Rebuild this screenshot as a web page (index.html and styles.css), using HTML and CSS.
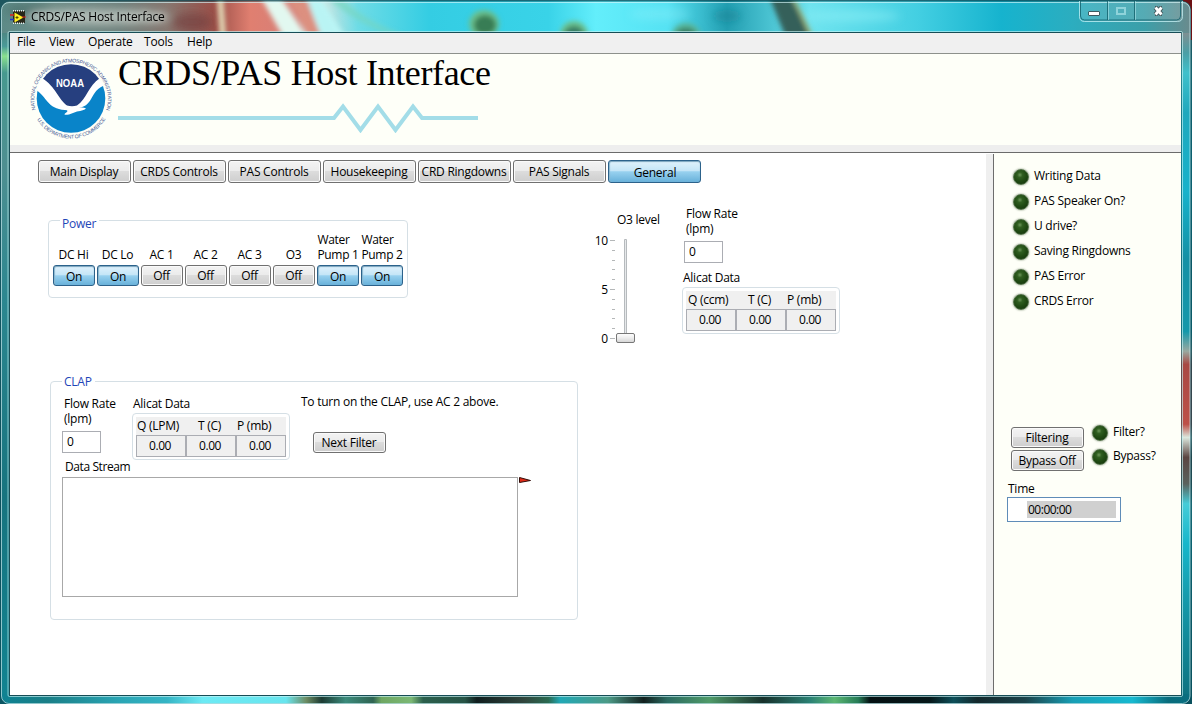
FILE: index.html
```html
<!DOCTYPE html>
<html lang="en">
<head>
<meta charset="utf-8">
<title>CRDS/PAS Host Interface</title>
<link rel="stylesheet" href="styles.css">
</head>
<body>
<svg class="wallpaper" width="1192" height="704" viewBox="0 0 1192 704" aria-hidden="true">
  <defs>
    <filter id="soft" x="-20%" y="-40%" width="140%" height="180%"><feGaussianBlur stdDeviation="4"/></filter>
    <filter id="fine" x="-30%" y="-30%" width="160%" height="160%"><feGaussianBlur stdDeviation="2.4"/></filter>
    <linearGradient id="top">
      <stop offset="0" stop-color="#5c8a87"/><stop offset=".04" stop-color="#6f8f8a"/><stop offset=".1" stop-color="#6d7f7b"/>
      <stop offset=".14" stop-color="#877770"/><stop offset=".18" stop-color="#9a4f48"/><stop offset=".21" stop-color="#e07f70"/>
      <stop offset=".25" stop-color="#d5807a"/><stop offset=".27" stop-color="#cfe6e2"/><stop offset=".3" stop-color="#6edce6"/>
      <stop offset=".36" stop-color="#34cde3"/><stop offset=".46" stop-color="#39d3e8"/><stop offset=".5" stop-color="#63eefb"/>
      <stop offset=".56" stop-color="#56e2f3"/><stop offset=".61" stop-color="#239fb2"/><stop offset=".68" stop-color="#6fe4ef"/>
      <stop offset=".77" stop-color="#43cfe2"/><stop offset=".84" stop-color="#16b3ce"/><stop offset=".9" stop-color="#2cadbf"/>
      <stop offset=".96" stop-color="#3c9fa9"/><stop offset="1" stop-color="#6b8a8c"/>
    </linearGradient>
    <linearGradient id="left" x2="0" y2="1">
      <stop offset="0" stop-color="#4d8783"/><stop offset=".02" stop-color="#4a9a98"/><stop offset=".035" stop-color="#8ae08e"/>
      <stop offset=".06" stop-color="#47998f"/><stop offset=".2" stop-color="#4e8f91"/><stop offset=".4" stop-color="#2c8790"/>
      <stop offset=".7" stop-color="#17747f"/><stop offset="1" stop-color="#118391"/>
    </linearGradient>
    <linearGradient id="right" x2="0" y2="1">
      <stop offset="0" stop-color="#7e8f92"/><stop offset=".03" stop-color="#4a9fa6"/><stop offset=".06" stop-color="#3fc0cb"/>
      <stop offset=".12" stop-color="#1fa8bd"/><stop offset=".24" stop-color="#17b2cb"/><stop offset=".34" stop-color="#1390a5"/>
      <stop offset=".45" stop-color="#1398aa"/><stop offset=".48" stop-color="#9aa9a0"/><stop offset=".5" stop-color="#a84843"/>
      <stop offset=".59" stop-color="#bd5048"/><stop offset=".61" stop-color="#dce8de"/><stop offset=".64" stop-color="#5b4541"/>
      <stop offset=".68" stop-color="#5a625d"/><stop offset=".71" stop-color="#45ccd8"/><stop offset=".77" stop-color="#16b7cb"/>
      <stop offset=".85" stop-color="#159bac"/><stop offset="1" stop-color="#0d7280"/>
    </linearGradient>
    <linearGradient id="bottom">
      <stop offset="0" stop-color="#0e8293"/><stop offset=".04" stop-color="#1a7f87"/><stop offset=".1" stop-color="#2aa5b4"/>
      <stop offset=".14" stop-color="#35b5c5"/><stop offset=".17" stop-color="#6ceaf4"/><stop offset=".24" stop-color="#68e5ee"/>
      <stop offset=".257" stop-color="#6c8b62"/><stop offset=".27" stop-color="#1c3b33"/><stop offset=".29" stop-color="#3b8b7b"/>
      <stop offset=".313" stop-color="#2f6452"/><stop offset=".32" stop-color="#6fa762"/><stop offset=".345" stop-color="#7bb874"/>
      <stop offset=".355" stop-color="#2b5f4c"/><stop offset=".39" stop-color="#275446"/><stop offset=".4" stop-color="#101e1e"/>
      <stop offset=".44" stop-color="#31463d"/><stop offset=".46" stop-color="#2a6a50"/><stop offset=".47" stop-color="#21a8b5"/>
      <stop offset=".51" stop-color="#4c9a86"/><stop offset=".54" stop-color="#12201e"/><stop offset=".56" stop-color="#2b6b61"/>
      <stop offset=".595" stop-color="#4f9a68"/><stop offset=".64" stop-color="#17302b"/><stop offset=".68" stop-color="#2b8274"/>
      <stop offset=".7" stop-color="#5bb672"/><stop offset=".72" stop-color="#267c56"/><stop offset=".73" stop-color="#041012"/>
      <stop offset=".78" stop-color="#061719"/><stop offset=".8" stop-color="#0e4f59"/><stop offset=".82" stop-color="#13282c"/>
      <stop offset=".86" stop-color="#1b4249"/><stop offset=".9" stop-color="#189fb5"/><stop offset=".95" stop-color="#17b9d0"/>
      <stop offset=".98" stop-color="#096c7c"/><stop offset="1" stop-color="#0a6f80"/>
    </linearGradient>
  </defs>
  <rect width="1192" height="34" fill="url(#top)"/>
  <g filter="url(#soft)">
    <ellipse cx="30" cy="10" rx="24" ry="6" fill="#426864" opacity=".6"/>
    <ellipse cx="98" cy="17" rx="72" ry="9" fill="#b3bdb7" opacity=".7"/>
    <ellipse cx="192" cy="22" rx="20" ry="9" fill="#713d3a" opacity=".6"/>
    <ellipse cx="660" cy="14" rx="30" ry="6" fill="#9af6fb" opacity=".3"/>
    <ellipse cx="727" cy="16" rx="14" ry="6" fill="#147b8e" opacity=".5"/>
    <ellipse cx="850" cy="16" rx="50" ry="6" fill="#8df0f8" opacity=".5"/>
  </g>
  <g filter="url(#fine)">
    <path d="M217-4h6l3 42h-6z" fill="#e4ddb9"/>
    <path d="M260-4h20l28 42h-24z" fill="#e2f8f0"/>
    <path d="M286-4h18l18 42h-12z" fill="#dc8f7f"/>
    <path d="M306-4h14l26 42h-24z" fill="#b9f4f4"/>
    <path d="M340-4q20 24 70 42h-12Q350 20 326-4z" fill="#77d5bd" opacity=".7"/>
    <ellipse cx="484" cy="24" rx="15" ry="14" fill="#6cc08c"/><ellipse cx="485" cy="25" rx="11" ry="10" fill="#397d55"/>
    <ellipse cx="574" cy="35" rx="14" ry="14" fill="#6cc08c"/><ellipse cx="574" cy="35" rx="10" ry="9" fill="#397d65"/>
    <ellipse cx="686" cy="35" rx="14" ry="12" fill="#58b598"/><ellipse cx="686" cy="35" rx="10" ry="7" fill="#397d65"/>
    <path d="M769-4h21l22 42h-26z" fill="#35605a"/><path d="M791-4h3l20 42h-4z" fill="#98ad72"/>
  </g>
  <rect y="33" width="11" height="663" fill="url(#left)"/>
  <rect x="1180" y="33" width="12" height="663" fill="url(#right)"/>
  <rect y="694" width="1192" height="10" fill="url(#bottom)"/>
  <path d="M0 0h1192v704H0zM1.5 9.500a8 8 0 0 1 8-8h1173a7.500 7.500 0 0 1 7.500 8v686a8 8 0 0 1-8 8H9.500a8 8 0 0 1-8-8z" fill="#0a4652" fill-rule="evenodd" opacity=".75"/>
  <path d="M1183 0h9v40h-1V9q-1-7-8-8z" fill="#6d1114"/>
  <rect x="1.500" y="2.500" width="1188.500" height="701" rx="7.500" fill="none" stroke="#d5f8fa" stroke-opacity=".65"/>
  <rect x="8" y="31.500" width="1174.500" height="665" rx="1.500" fill="none" stroke="#c6f3f5" stroke-opacity=".65"/>
  <rect x="9.500" y="32.500" width="1171.500" height="663" fill="none" stroke="#174d56"/>
</svg>

<div class="window">
  <header class="titlebar">
    <svg class="app-icon" width="16" height="14" viewBox="0 0 16 14">
      <rect x="3" y="1" width="12" height="12" fill="#28281b"/>
      <path d="M3 .8h12M3 13.200h12" stroke="#eee" stroke-width="1.500" stroke-dasharray="1 1"/>
      <path d="M4.500 2.500l9 5-9 5z" fill="#ffef23"/>
      <path d="M7 6v3M5.500 7.500h3" stroke="#544800"/>
      <path d="M0 5h4" stroke="#d8201e" stroke-width="1.500"/><path d="M0 9.500h4" stroke="#2535c9" stroke-width="1.500"/><path d="M12 7h4" stroke="#d8201e"/>
    </svg>
    <h1 class="caption">CRDS/PAS Host Interface</h1>
    <svg class="controls" width="104" height="21" viewBox="0 0 104 21">
      <path d="M.5 0v15.500q0 5 5 5h93q5 0 5-5V0" fill="#fff" fill-opacity=".13" stroke="#c5f2f5" stroke-opacity=".75"/>
      <path d="M1.500 0v15q0 4 4 4h92q4 0 4-4V0M28.500 0v19M55.500 0v19" fill="none" stroke="#13606c" stroke-opacity=".8"/>
      <path d="M29.500 0v19M56.500 0v19" stroke="#bdf0f4" stroke-opacity=".5"/>
      <rect x="9.500" y="10.500" width="11" height="4" rx=".5" fill="#fff" stroke="#3c5b61"/>
      <path d="M38 7h8v6h-8z" fill="none" stroke="#8fd3da" stroke-width="2"/>
      <path d="M76.500 6.500l6 7M82.500 6.500l-6 7" stroke="#45585d" stroke-width="4.800"/>
      <path d="M76 6.500h2M81 6.500h2M76 13.500h2M81 13.500h2" stroke="#45585d" stroke-width="3"/>
      <path d="M76.500 6.500l6 7M82.500 6.500l-6 7" stroke="#fff" stroke-width="2.800"/>
    </svg>
  </header>

  <div class="client">
    <nav class="menu"><span class="m-file">File</span><span class="m-view">View</span><span class="m-operate">Operate</span><span class="m-tools">Tools</span><span>Help</span></nav>

    <section class="banner">
      <svg class="logo" width="84" height="84" viewBox="0 0 84 84" role="img">
        <defs>
          <clipPath id="disc"><circle cx="42" cy="42.500" r="34.300"/></clipPath>
          <path id="ringTop" d="M7 54.500A36.800 36.800 0 1 1 77 54.500"/>
          <path id="ringBottom" d="M6.500 61A40 40 0 0 0 77.500 61"/>
        </defs>
        <g clip-path="url(#disc)">
          <rect width="84" height="84" fill="#fff"/>
          <path d="M13 22C20 0 62 0 71 22C59 30 58 43 48 49.500Q43 51 38 49.500C29 43 27 31 13 22z" fill="#263f7f"/>
          <path d="M5 33C18 39 17 53 36 54Q41 54 36 57.500Q34 59.500 40 58.500L48 55.500Q55 54.500 57 52.500Q54 51 50 52C66 49 60 34 77 29V80H5z" fill="#0984c9"/>
        </g>
        <text x="41" y="31" class="noaa" textLength="28" lengthAdjust="spacingAndGlyphs">NOAA</text>
        <text class="ring"><textPath href="#ringTop" textLength="137" startOffset="1">NATIONAL OCEANIC AND ATMOSPHERIC ADMINISTRATION</textPath></text>
        <text class="ring"><textPath href="#ringBottom" textLength="82" startOffset="3">U.S. DEPARTMENT OF COMMERCE</textPath></text>
      </svg>
      <div class="brand">
        <h2 class="headline">CRDS/PAS Host Interface</h2>
        <svg class="wave" width="360" height="30" viewBox="0 0 360 30"><path d="M0 15H216L225 3.500L242.500 27L260 3.500L277.500 27L295 3.500L304 15H360" fill="none" stroke="#a3dde8" stroke-width="4"/></svg>
      </div>
    </section>

    <div class="body">
      <main class="pane">
        <div class="tabs">
          <button class="btn tab">Main Display</button><button class="btn tab">CRDS Controls</button><button class="btn tab">PAS Controls</button><button class="btn tab">Housekeeping</button><button class="btn tab">CRD Ringdowns</button><button class="btn tab">PAS Signals</button><button class="btn tab on">General</button>
        </div>

        <div class="upper">
          <section class="group power">
            <h3 class="legend">Power</h3>
            <div class="switches">
              <div class="switch"><span>DC Hi</span><button class="btn on">On</button></div>
              <div class="switch"><span>DC Lo</span><button class="btn on">On</button></div>
              <div class="switch"><span>AC 1</span><button class="btn">Off</button></div>
              <div class="switch"><span>AC 2</span><button class="btn">Off</button></div>
              <div class="switch"><span>AC 3</span><button class="btn">Off</button></div>
              <div class="switch"><span>O3</span><button class="btn">Off</button></div>
              <div class="switch pump"><span>Water<br>Pump 1</span><button class="btn on">On</button></div>
              <div class="switch pump"><span>Water<br>Pump 2</span><button class="btn on">On</button></div>
            </div>
          </section>

          <section class="level">
            <span class="level-name">O3 level</span>
            <svg width="54" height="120" viewBox="-4 0 54 120">
              <defs><linearGradient id="thumb" x2="0" y2="1"><stop offset="0" stop-color="#fff"/><stop offset=".5" stop-color="#ededed"/><stop offset="1" stop-color="#d4d4d4"/></linearGradient></defs>
              <path d="M17 11.500h5M17 60.500h5M17 109.500h5M19 21.500h3M19 31.500h3M19 40.500h3M19 50.500h3M19 70.500h3M19 80.500h3M19 89.500h3M19 99.500h3" stroke="#b4b7b8"/>
              <path d="M31.500 109V10.500h2V109" fill="#e6e8ea" stroke="#b6babd"/>
              <rect x="23.500" y="104.500" width="18" height="9" rx="1.500" fill="url(#thumb)" stroke="#777"/>
              <text x="15" y="16" class="tick">10</text><text x="15" y="65" class="tick">5</text><text x="15" y="114" class="tick">0</text>
            </svg>
          </section>

          <section class="flow-side">
            <span class="flow-label">Flow Rate<br>(lpm)</span>
            <div class="field">0</div>
            <span class="alicat-label">Alicat Data</span>
            <div class="cluster">
              <div class="heads"><span class="c1">Q (ccm)</span><span class="c2">T (C)</span><span>P (mb)</span></div>
              <div class="values"><span>0.00</span><span>0.00</span><span>0.00</span></div>
            </div>
          </section>
        </div>

        <section class="group clap">
          <h3 class="legend">CLAP</h3>
          <div class="clap-row">
            <div class="clap-flow"><span class="flow-label">Flow Rate<br>(lpm)</span><div class="field">0</div></div>
            <div class="clap-alicat">
              <span class="alicat-label">Alicat Data</span>
              <div class="cluster">
                <div class="heads lpm"><span class="c1">Q (LPM)</span><span class="c2">T (C)</span><span>P (mb)</span></div>
                <div class="values"><span>0.00</span><span>0.00</span><span>0.00</span></div>
              </div>
            </div>
            <div class="clap-note"><span>To turn on the CLAP, use AC 2 above.</span><button class="btn next">Next Filter</button></div>
          </div>
          <span class="stream-label">Data Stream</span>
          <div class="stream-row">
            <div class="stream"></div>
            <svg width="13" height="8" viewBox="0 0 13 8"><path d="M.5.500L11.500 3.500L.5 5.500z" fill="#e02a17" stroke="#310c08"/></svg>
          </div>
        </section>
      </main>

      <div class="splitter"></div>

      <aside class="status">
        <div class="leds">
          <div class="led-row"><i class="led"></i><span>Writing Data</span></div>
          <div class="led-row"><i class="led"></i><span>PAS Speaker On?</span></div>
          <div class="led-row"><i class="led"></i><span>U drive?</span></div>
          <div class="led-row"><i class="led"></i><span>Saving Ringdowns</span></div>
          <div class="led-row"><i class="led"></i><span>PAS Error</span></div>
          <div class="led-row"><i class="led"></i><span>CRDS Error</span></div>
        </div>
        <div class="filters">
          <div class="filter-row"><button class="btn wide">Filtering</button><i class="led"></i><span>Filter?</span></div>
          <div class="filter-row"><button class="btn wide">Bypass Off</button><i class="led"></i><span>Bypass?</span></div>
        </div>
        <span class="time-label">Time</span>
        <div class="time"><span>00:00:00</span></div>
      </aside>
    </div>
  </div>
</div>
</body>
</html>
```
FILE: styles.css
```css
* { box-sizing: border-box; }
body {
  margin: 0;
  width: 1192px;
  height: 704px;
  overflow: hidden;
  position: relative;
  font: 12px/15px "Open Sans", "Noto Sans", sans-serif;
  letter-spacing: -0.25px;
  color: #000;
  background: #17747f;
}
h1, h2, h3 { margin: 0; font-weight: 400; }
span { white-space: nowrap; }
.wallpaper { position: absolute; left: 0; top: 0; }
.window { position: relative; padding: 0 11px 9px 10px; height: 704px; display: flex; flex-direction: column; }

.titlebar { height: 33px; display: flex; flex: none; }
.app-icon { margin-top: 10px; }
.caption { margin: 9px 0 0 5px; font-size: 12px; line-height: 15px; flex: 1; letter-spacing: -0.2px; text-shadow: 0 0 6px #fff8, 0 0 10px #fff8; }
.controls { margin: 1px -2px 0 0; }

.client { flex: 1; display: flex; flex-direction: column; background: #fff; min-height: 0; }
.menu { height: 21px; flex: none; display: flex; padding: 1px 0 0 7px; background: #f0f0f0; border-bottom: 1px solid #8d918c; letter-spacing: -0.2px; }
.m-file { width: 32px; }
.m-view { width: 39px; }
.m-operate { width: 56px; }
.m-tools { width: 43px; }

.banner { height: 99px; flex: none; display: flex; background: #fefff8; border-bottom: 1px solid #6b6b6b; box-shadow: inset 0 -7px #eee; }
.logo { margin: 2px 0 0 19px; }
.brand { margin-left: 5px; }
.headline { font: 36px/40px "Liberation Serif", serif; letter-spacing: -0.35px; color: #000; height: 49px; margin-top: -1px; white-space: nowrap; }
.wave { display: block; margin-top: 1px; }
.noaa { font: bold 11px "Liberation Sans", sans-serif; fill: #fff; text-anchor: middle; letter-spacing: 0; }
.ring { font: 5.200px "Liberation Sans", sans-serif; fill: #4a5d97; letter-spacing: 0; }

.body { flex: 1; display: flex; min-height: 0; }
.pane { width: 976px; background: #fff; }
.splitter { width: 8px; background: #efefef; border-right: 1px solid #6d6d6d; margin-top: 1px; }
.status { flex: 1; background: #fefff8; }

.btn {
  display: block;
  font: inherit;
  letter-spacing: inherit;
  color: #000;
  padding: 0 1px 0 0;
  height: 21px;
  line-height: 18px;
  border: 1px solid #707070;
  border-radius: 3px;
  text-align: center;
  white-space: nowrap;
  background: linear-gradient(#f3f3f3, #ebebeb 48%, #dcdcdc 50%, #cecece);
  box-shadow: inset 0 0 0 1px #fafafa;
}
.btn.on {
  border-color: #2c628b;
  padding: 2px 0 0;
  background: linear-gradient(#e0f2fc, #c4e5f7 47%, #98d1ef 51%, #68b1da);
  box-shadow: inset 0 1px 1px #7aa5bd, inset 1px 0 1px #8cbad0;
}
.tabs { display: flex; gap: 2px; padding: 7px 0 0 28px; }
.tab { width: 93px; height: 23px; line-height: 21px; }
.tab.on { padding: 1px 0 0 1px; }

.upper { display: flex; height: 198px; }
.group { position: relative; border: 1px solid #d5dfe5; border-radius: 4px; }
.legend { position: absolute; top: -5px; left: 11px; padding: 0 3px 0 2px; font-size: 12px; line-height: 15px; color: #1f46b8; background: #fff; }
.power { width: 360px; height: 78px; margin: 37px 0 0 38px; }
.switches { display: flex; gap: 2px; padding: 11px 0 0 4px; }
.switch { width: 42px; display: flex; flex-direction: column; align-items: center; }
.switch span { height: 33px; display: flex; align-items: flex-end; padding: 0 1px 3px 0; }
.switch.pump span { display: block; padding: 0; letter-spacing: -0.3px; }
.switch .btn { width: 42px; }

.level { margin: 29px 0 0 181px; width: 70px; }
.level-name { display: block; margin-left: 28px; height: 17px; }
.level svg { display: block; }
.tick { font: 12px "Open Sans", sans-serif; text-anchor: end; letter-spacing: -0.2px; fill: #000; }

.flow-side { margin: 23px 0 0 25px; }
.flow-label { display: block; margin-left: 2px; height: 35px; }
.field { width: 39px; height: 22px; border: 1px solid #abadb3; padding: 2px 4px; background: #fff; }
.alicat-label { display: block; }
.flow-side .alicat-label { margin: 7px 0 2px -1px; }
.cluster { width: 158px; height: 47px; border: 1px solid #d5dfe5; border-radius: 4px; padding: 3px; }
.flow-side .cluster { margin-left: -2px; }
.heads { display: flex; height: 18px; width: 150px; background: #f0f0f0; padding: 1px 0 0 2px; }
.c1 { width: 60px; }
.c2 { width: 39px; }
.heads.lpm { padding-left: 1px; }
.heads.lpm .c1 { width: 61px; }
.values { display: grid; grid-template-columns: repeat(3, 50px); }
.values span { height: 22px; line-height: 20px; border: 1px solid #abadb3; background: #f0f0f0; text-align: center; letter-spacing: -0.4px; padding-right: 2px; }

.clap { width: 528px; height: 239px; margin-left: 40px; }
.clap .legend { top: -8px; }
.clap-row { display: flex; padding: 14px 0 0 11px; height: 77px; }
.clap-flow { width: 70px; }
.clap-alicat { width: 169px; }
.clap-alicat .alicat-label { margin-left: 1px; height: 17px; }
.clap-note { margin-top: -2px; }
.next { width: 73px; margin: 23px 0 0 12px; line-height: 20px; }
.stream-label { display: block; margin-left: 14px; height: 18px; letter-spacing: -0.4px; }
.stream-row { display: flex; padding-left: 11px; }
.stream { width: 456px; height: 120px; border: 1px solid #a8a8a8; }
.stream-row svg { margin-left: 1px; }

.leds { padding: 15px 0 0 19px; height: 274px; }
.led-row { display: flex; height: 25px; }
.led-row span { margin-left: 5px; }
.led {
  flex: none;
  width: 16px;
  height: 16px;
  border-radius: 50%;
  background: radial-gradient(circle at 42% 35%, #6b9558 0, #2f5e20 22%, #214c14 50%, #173a0e 80%);
  border: 1px solid #4f6e45;
  box-shadow: 0 0 2px #64785c;
}
.led-row .led { margin-top: 1px; }
.filters { padding-left: 17px; }
.filter-row { display: flex; height: 23px; }
.wide { width: 73px; line-height: 20px; }
.filter-row .led { margin: -2px 0 0 8px; }
.filter-row span { margin: -3px 0 0 5px; }
.filter-row + .filter-row .led { margin-top: -1px; }
.filter-row + .filter-row span { margin-top: -2px; }
.time-label { display: block; margin: 8px 0 0 14px; height: 16px; }
.time { width: 114px; height: 25px; margin-left: 13px; border: 1px solid #5f8cb8; background: #fff; padding: 3px 4px 3px 19px; }
.time span { display: block; height: 17px; line-height: 17px; padding-left: 1px; background: #d0d0d0; letter-spacing: -0.5px; }
```
